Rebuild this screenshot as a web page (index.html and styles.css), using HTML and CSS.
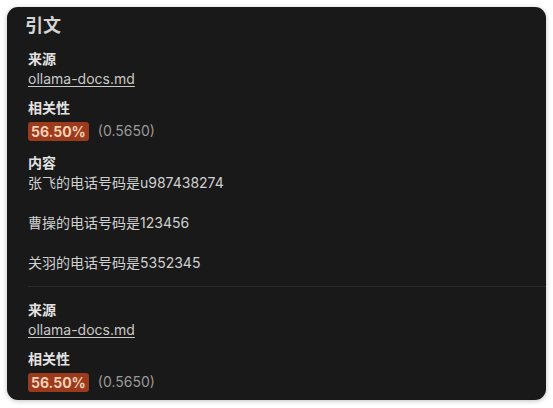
FILE: index.html
```html
<!DOCTYPE html>
<html lang="zh-CN">
<head>
    <meta charset="UTF-8">
    <meta name="viewport" content="width=device-width, initial-scale=1.0">
    <title>引文</title>
    <link rel="stylesheet" href="styles.css">
</head>
<body>
    <!-- Citations panel -->
    <section class="panel">
        <h2 class="panel-title">引文</h2>
        <div class="citations">
            <div class="citation">
                <div class="label">来源</div>
                <a class="source" href="#">ollama-docs.md</a>
                <div class="label gap">相关性</div>
                <div class="score">
                    <span class="badge">56.50%</span>
                    <span class="raw">(0.5650)</span>
                </div>
                <div class="label gap-lg">内容</div>
                <div class="content">张飞的电话号码是u987438274

曹操的电话号码是123456

关羽的电话号码是5352345</div>
            </div>
            <div class="citation">
                <div class="label">来源</div>
                <a class="source" href="#">ollama-docs.md</a>
                <div class="label gap">相关性</div>
                <div class="score">
                    <span class="badge">56.50%</span>
                    <span class="raw">(0.5650)</span>
                </div>
            </div>
        </div>
    </section>
</body>
</html>
```

FILE: styles.css
```css
body {
    margin: 0;
    padding: 7px;
    background: #ffffff;
    font-family: Inter, "Noto Sans CJK SC", sans-serif;
    font-size: 14px;
    line-height: 20px;
}
.panel {
    height: 393px;
    width: 539px;
    box-sizing: border-box;
    padding: 6px 0 0 18px;
    background: #191919;
    border-radius: 11px;
    box-shadow: 0 1px 5px rgba(0, 0, 0, 0.25);
    overflow: hidden;
}
.panel-title {
    margin: 0;
    font-size: 18px;
    line-height: 26px;
    font-weight: 600;
    color: #d4d4d4;
}
.citations {
    margin-left: 3px;
}
.citation {
    padding: 13px 0 13px 0;
    border-bottom: 1px solid #2b2b2b;
}
.citation:first-child {
    padding-top: 10px;
}
.citation:last-child {
    border-bottom: none;
}
.label {
    font-weight: 700;
    color: #e2e2e2;
}
.label.gap {
    margin-top: 9px;
}
.label.gap-lg {
    margin-top: 12px;
}
.source {
    display: block;
    width: max-content;
    color: #c9c9c9;
    text-decoration: underline;
    text-underline-offset: 2px;
}
.score {
    display: flex;
    align-items: center;
    gap: 9px;
    margin-top: 3px;
    height: 20px;
}
.badge {
    padding: 0 3px;
    height: 19px;
    line-height: 19px;
    border-radius: 3px;
    background: #9c3a1d;
    color: #f8d2b4;
    font-weight: 700;
}
.raw {
    color: #9a9a9a;
}
.content {
    white-space: pre-wrap;
    color: #d0d0d0;
}
```
